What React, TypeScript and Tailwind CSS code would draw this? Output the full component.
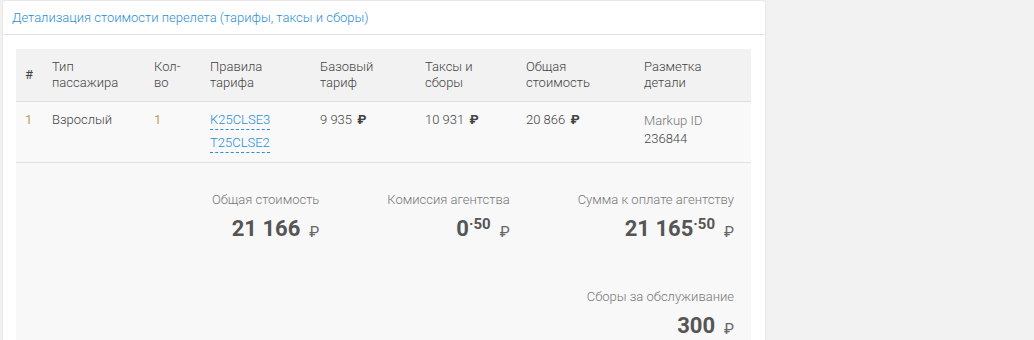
import React from "react";

const Rub = ({ className = "" }: { className?: string }) => (
  <span className={className}>₽</span>
);

function Big({ main, cents }: { main: string; cents?: string }) {
  return (
    <div className="flex items-start justify-end text-[#555]">
      <span className="text-[22px] font-bold leading-[28px]">{main}</span>
      {cents && (
        <span className="text-[15px] font-bold leading-[16px] mt-[1px]">·{cents}</span>
      )}
      <span className="ml-[9px] mt-[9px] text-[15px] leading-[16px] font-normal text-[#666]">₽</span>
    </div>
  );
}

function SumItem({ label, main, cents }: { label: string; main: string; cents?: string }) {
  return (
    <div className="flex flex-col items-end">
      <div className="text-[13px] leading-[16px] text-[#777] font-light">{label}</div>
      <div className="mt-[7px]">
        <Big main={main} cents={cents} />
      </div>
    </div>
  );
}

export default function App() {
  const th = "px-[9px] py-[10px] text-left align-top font-light";
  const td = "px-[9px] pt-[10px] pb-[9px] align-top font-light";
  return (
    <div
      className="w-[1034px] h-[340px] overflow-hidden bg-[#f2f2f2] pt-[1px] pl-[3px]"
      style={{ fontFamily: "Roboto, 'Noto Sans', sans-serif" }}
    >
      <div className="w-[762px] h-[400px] bg-white rounded-[3px] shadow-[0_0_2px_rgba(0,0,0,0.15)]">
        <div className="h-[34px] border-b border-[#e3e3e3] px-[9px] flex items-center">
          <span className="text-[13px] text-[#2b8fd6] font-light">
            Детализация стоимости перелета (тарифы, таксы и сборы)
          </span>
        </div>
        <div className="pl-[13px] pr-[14px] pt-[14px]">
          <table className="w-[735px] border-collapse text-[13px] leading-[16px] text-[#444] table-fixed">
            <colgroup>
              <col className="w-[27px]" />
              <col className="w-[102px]" />
              <col className="w-[56px]" />
              <col className="w-[110px]" />
              <col className="w-[105px]" />
              <col className="w-[101px]" />
              <col className="w-[118px]" />
              <col className="w-[116px]" />
            </colgroup>
            <thead>
              <tr className="bg-[#f2f2f2] border-b border-[#e0e0e0]">
                <th className={th + " pt-[18px] font-normal"}>#</th>
                <th className={th}>Тип<br />пассажира</th>
                <th className={th}>Кол-<br />во</th>
                <th className={th}>Правила<br />тарифа</th>
                <th className={th}>Базовый<br />тариф</th>
                <th className={th}>Таксы и<br />сборы</th>
                <th className={th}>Общая<br />стоимость</th>
                <th className={th}>Разметка<br />детали</th>
              </tr>
            </thead>
            <tbody>
              <tr className="bg-[#f9f9f9] border-b border-[#e3e3e3] h-[61px]">
                <td className={td + " text-[#c49a62] !font-normal"}>1</td>
                <td className={td}>Взрослый</td>
                <td className={td + " text-[#c49a62] !font-normal"}>1</td>
                <td className={td}>
                  <div className="flex flex-col items-start gap-[5px]">
                    <span className="text-[#2b8fd6] border-b border-dashed border-[#2b8fd6] pb-[1px]">K25CLSE3</span>
                    <span className="text-[#2b8fd6] border-b border-dashed border-[#2b8fd6] pb-[1px]">T25CLSE2</span>
                  </div>
                </td>
                <td className={td}>9 935 <Rub className="font-bold ml-[2px]" /></td>
                <td className={td}>10 931 <Rub className="font-bold ml-[2px]" /></td>
                <td className={td}>20 866 <Rub className="font-bold ml-[2px]" /></td>
                <td className={td + " leading-[18px]"}>
                  <span className="text-[#777]">Markup ID</span>
                  <br />
                  236844
                </td>
              </tr>
            </tbody>
          </table>
          <div className="w-[735px] h-[200px] bg-[#f8f8f8] pr-[17px] pt-[29px]">
            <div className="flex justify-end gap-[68px]">
              <SumItem label="Общая стоимость" main="21 166" />
              <SumItem label="Комиссия агентства" main="0" cents="50" />
              <SumItem label="Сумма к оплате агентству" main="21 165" cents="50" />
            </div>
            <div className="flex justify-end mt-[46px]">
              <SumItem label="Сборы за обслуживание" main="300" />
            </div>
          </div>
        </div>
      </div>
    </div>
  );
}
